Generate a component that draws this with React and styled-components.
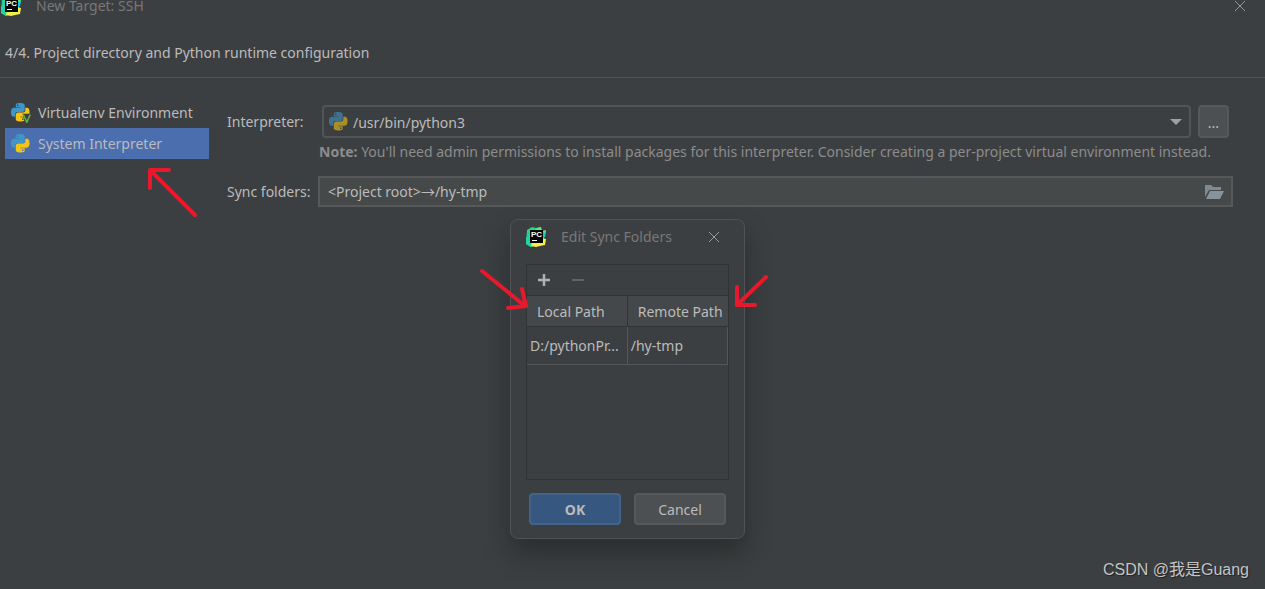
import styled, { createGlobalStyle } from 'styled-components';

const GlobalStyle = createGlobalStyle`
  * {
    box-sizing: border-box;
  }

  body {
    margin: 0;
    background: #3c3f41;
    color: #bbbbbb;
    font-family: 'Noto Sans', 'Open Sans', 'Noto Sans CJK SC', sans-serif;
    font-size: 14px;
    line-height: 20px;
  }

  button,
  input,
  select {
    color: inherit;
    font: inherit;
  }
`;

const Page = styled.div`
  position: relative;
  display: flex;
  flex-direction: column;
  min-height: 100vh;
  overflow: hidden;
`;

const TitleBar = styled.header`
  display: flex;
  align-items: center;
  gap: 15px;
  height: 28px;
  margin-top: -8px;
  padding: 0 19px 0 1px;
  color: #787878;
`;

const WindowTitle = styled.span`
  flex: 1;
  line-height: 12px;
`;

const CloseButton = styled.button`
  display: flex;
  padding: 0;
  border: 0;
  background: none;
  color: #999999;
`;

const StepTitle = styled.h1`
  margin: 0;
  padding: 23px 5px 14px;
  border-bottom: 1px solid #505355;
  font-size: 14px;
  font-weight: 400;
`;

const Content = styled.main`
  display: flex;
  align-items: flex-start;
  gap: 18px;
  padding: 19px 32px 0 5px;
`;

const EnvironmentList = styled.nav`
  flex: 0 0 204px;
`;

const EnvironmentLink = styled.a`
  display: flex;
  align-items: center;
  gap: 7px;
  height: 31px;
  padding-left: 6px;
  background: ${({ $selected }) => ($selected ? '#4b6eaf' : 'transparent')};
  color: inherit;
  text-decoration: none;
`;

const Form = styled.form`
  flex: 1;
  display: grid;
  grid-template-columns: 91px minmax(0, 1fr);
  padding-top: 8px;
`;

const Label = styled.label`
  align-self: center;
  white-space: nowrap;
`;

const InterpreterRow = styled.div`
  display: flex;
  gap: 7px;
  padding: 0 4px;
`;

const SelectBox = styled.div`
  flex: 1;
  display: grid;
  align-items: center;

  > * {
    grid-area: 1 / 1;
  }

  > svg {
    pointer-events: none;
  }

  > svg:first-of-type {
    margin-left: 7px;
  }

  > svg:last-of-type {
    justify-self: end;
    margin-right: 9px;
  }
`;

const Select = styled.select`
  width: 100%;
  height: 33px;
  padding: 2px 29px 0;
  appearance: none;
  border: 2px solid #525557;
  border-radius: 4px;
  background: #3c3f41;
`;

const BrowseButton = styled.button`
  width: 31px;
  height: 33px;
  padding: 2px 0 0;
  border: 2px solid #56595b;
  border-radius: 4px;
  background: #4c5052;
`;

const Note = styled.p`
  grid-column: 2;
  margin: 0 0 14px;
  padding: 4px 0 0 1px;
  color: #8c8c8c;
  white-space: nowrap;
`;

const FolderField = styled.div`
  display: flex;
  align-items: center;
  height: 31px;
  padding: 0 7px 0 8px;
  border: 2px solid #565859;
  background: #45494a;
`;

const FolderInput = styled.input`
  flex: 1;
  min-width: 0;
  padding: 0;
  border: 0;
  background: none;
`;

const IconButton = styled.button`
  display: flex;
  padding: 0;
  border: 0;
  background: none;
`;

const Dialog = styled.section`
  position: absolute;
  top: 219px;
  left: 510px;
  width: 235px;
  padding: 0 16px 13px;
  border: 1px solid #505355;
  border-radius: 8px;
  background: #3c3f41;
  box-shadow: 0 14px 28px rgba(0, 0, 0, 0.3);
`;

const DialogHeader = styled.div`
  display: flex;
  align-items: center;
  gap: 15px;
  height: 34px;
  margin-left: -1px;
  padding-right: 8px;
  color: #787878;
`;

const DialogTitle = styled.h2`
  flex: 1;
  margin: 0;
  font-size: 14px;
  font-weight: 400;
  white-space: nowrap;
`;

const TablePanel = styled.div`
  height: 216px;
  margin: 10px -1px 0;
  border: 1px solid #323232;
`;

const TableToolbar = styled.div`
  display: flex;
  align-items: center;
  gap: 20px;
  height: 30px;
  padding-left: 10px;
`;

const PathTable = styled.table`
  width: 100%;
  table-layout: fixed;
  border-collapse: collapse;

  th,
  td {
    text-align: left;
    white-space: nowrap;
  }

  th {
    height: 31px;
    padding: 2px 0 0 10px;
    border-top: 1px solid #323232;
    border-bottom: 1px solid #323232;
    background: #45484a;
    font-weight: 400;
  }

  th + th {
    border-left: 1px solid #323232;
  }

  td {
    height: 38px;
    padding: 0 3px;
    border-right: 1px solid #555759;
    border-bottom: 1px solid #555759;
  }
`;

const DialogActions = styled.div`
  display: flex;
  gap: 13px;
  padding: 13px 2px 0;
`;

const DialogButton = styled.button`
  flex: 1;
  height: 32px;
  padding: 2px 0 0;
  border: 2px solid ${({ $primary }) => ($primary ? '#43648a' : '#56595b')};
  border-radius: 4px;
  background: ${({ $primary }) => ($primary ? '#365880' : '#4c5052')};
  font-weight: ${({ $primary }) => ($primary ? 700 : 400)};
`;

const Arrows = styled.svg`
  position: absolute;
  top: 0;
  left: 0;
  pointer-events: none;
`;

const Watermark = styled.footer`
  margin-top: auto;
  padding: 0 16px 7px;
  color: #c4c4c4;
  font-family: 'Liberation Sans', 'Noto Sans CJK SC', sans-serif;
  font-size: 16px;
  line-height: 24px;
  text-align: right;
  text-shadow: 1px 1px 1px #222222;
`;

const PyCharmIcon = () => (
  <svg width="20" height="22" viewBox="0 0 20 22" aria-hidden="true">
    <path d="M1 4 6 1l4 1 4-1 2 3 1 5-3 9-9 3-5-3z" fill="#21d789" />
    <path d="M0 12 4 7l3 12-2 2-5-3z" fill="#22d3a5" />
    <path d="m9 3 6-2 1 4 4-1-1 7-5-1z" fill="#65e86b" />
    <path d="m15 6 5 1-2 4 1 3-4-1z" fill="#07c3f2" />
    <path d="m15 12 5 1-1 6-5 1-4 1-5-1 1-4z" fill="#f4f04a" />
    <rect x="4" y="4" width="13" height="13" fill="#000000" />
    <text x="5" y="11" fill="#ffffff" fontFamily="Liberation Sans" fontSize="8" fontWeight="700">
      PC
    </text>
    <path d="M6 14h5v1H6z" fill="#ffffff" />
  </svg>
);

const PythonIcon = ({ venv, dimmed }) => (
  <svg width="20" height="20" viewBox="0 0 26 26" aria-hidden="true">
    <g opacity={dimmed ? 0.6 : 1}>
      <path
        fill="#3e97c8"
        d="M14.25.18l.9.2.73.26.59.3.45.32.34.34.25.34.16.33.1.3.04.26.02.2-.01.13V8.5l-.05.63-.13.55-.21.46-.26.38-.3.31-.33.25-.35.19-.35.14-.33.1-.3.07-.26.04-.21.02H8.77l-.69.05-.59.14-.5.22-.41.27-.33.32-.27.35-.2.36-.15.37-.1.35-.07.32-.04.27-.02.21v3.06H3.17l-.21-.03-.28-.07-.32-.12-.35-.18-.36-.26-.36-.36-.35-.46-.32-.59-.28-.73-.21-.88-.14-1.05-.05-1.23.06-1.22.16-1.04.24-.87.32-.71.36-.57.4-.44.42-.33.42-.24.4-.16.36-.1.32-.05.24-.01h.16l.06.01h8.16v-.83H6.18l-.01-2.75-.02-.37.05-.34.11-.31.17-.28.25-.26.31-.23.38-.2.44-.18.51-.15.58-.12.64-.1.71-.06.77-.04.84-.02 1.27.05zm-6.3 1.98l-.23.33-.08.41.08.41.23.34.33.22.41.09.41-.09.33-.22.23-.34.08-.41-.08-.41-.23-.33-.33-.22-.41-.09-.41.09z"
      />
      <path
        fill="#f2c415"
        d="M21.04 6.11l.28.06.32.12.35.18.36.27.36.35.35.47.32.59.28.73.21.88.14 1.04.05 1.23-.06 1.23-.16 1.04-.24.86-.32.71-.36.57-.4.45-.42.33-.42.24-.4.16-.36.09-.32.05-.24.02-.16-.01h-8.22v.82h5.84l.01 2.76.02.36-.05.34-.11.31-.17.29-.25.25-.31.24-.38.2-.44.17-.51.15-.58.13-.64.09-.71.07-.77.04-.84.01-1.27-.04-1.07-.14-.9-.2-.73-.25-.59-.3-.45-.33-.34-.34-.25-.34-.16-.33-.1-.3-.04-.25-.02-.2.01-.13v-5.34l.05-.64.13-.54.21-.46.26-.38.3-.32.33-.24.35-.2.35-.14.33-.1.3-.06.26-.04.21-.02.13-.01h5.84l.69-.05.59-.14.5-.21.41-.28.33-.32.27-.35.2-.36.15-.36.1-.35.07-.32.04-.28.02-.21V6.07h2.09l.14.01zm-6.47 14.25l-.23.33-.08.41.08.41.23.33.33.23.41.08.41-.08.33-.23.23-.33.08-.41-.08-.41-.23-.33-.33-.23-.41-.08-.41.08z"
      />
    </g>
    {venv && (
      <>
        <path d="M15 14h11v12h-8z" fill="#3c3f41" />
        <path d="m16 15 4.500 10L25 15" fill="none" stroke="#62b543" strokeWidth="2" />
      </>
    )}
  </svg>
);

const CloseIcon = () => (
  <svg width="12" height="12" viewBox="0 0 12 12" aria-hidden="true">
    <path d="m1 1 10 10M11 1 1 11" stroke="currentColor" />
  </svg>
);

const FolderIcon = () => (
  <svg width="20" height="16" viewBox="0 0 20 16" aria-hidden="true">
    <path d="M1 1h6l2 2h8v3H5l-4 7z" fill="#7f8b91" />
    <path d="M6 7h14l-4 8H2z" fill="#87939a" />
  </svg>
);

const environments = [
  { name: 'Virtualenv Environment', venv: true },
  { name: 'System Interpreter', selected: true },
];

const syncFolders = [{ local: 'D:/pythonPr...', remote: '/hy-tmp' }];

const arrowPaths = [
  'M195 215 150 170M169 170H150V188',
  'M482 271 525 306M522 289l4 17-18 2',
  'M766 277 737 305M737 287v18h18',
];

const SyncFoldersDialog = () => (
  <Dialog role="dialog" aria-labelledby="dialog-title">
    <DialogHeader>
      <PyCharmIcon />
      <DialogTitle id="dialog-title">Edit Sync Folders</DialogTitle>
      <CloseButton type="button" aria-label="Close dialog">
        <CloseIcon />
      </CloseButton>
    </DialogHeader>
    <TablePanel>
      <TableToolbar>
        <IconButton type="button" aria-label="Add">
          <svg width="14" height="14" viewBox="0 0 14 14">
            <path d="M7 1v12M1 7h12" stroke="#afb1b3" strokeWidth="2.500" />
          </svg>
        </IconButton>
        <IconButton type="button" aria-label="Remove" disabled>
          <svg width="14" height="14" viewBox="0 0 14 14">
            <path d="M1 7h12" stroke="#606365" strokeWidth="2" />
          </svg>
        </IconButton>
      </TableToolbar>
      <PathTable>
        <thead>
          <tr>
            <th>Local Path</th>
            <th>Remote Path</th>
          </tr>
        </thead>
        <tbody>
          {syncFolders.map((folder) => (
            <tr key={folder.local}>
              <td>{folder.local}</td>
              <td>{folder.remote}</td>
            </tr>
          ))}
        </tbody>
      </PathTable>
    </TablePanel>
    <DialogActions>
      <DialogButton type="button" $primary>
        OK
      </DialogButton>
      <DialogButton type="button">Cancel</DialogButton>
    </DialogActions>
  </Dialog>
);

const App = () => (
  <>
    <GlobalStyle />
    <Page>
      <TitleBar>
        <PyCharmIcon />
        <WindowTitle>New Target: SSH</WindowTitle>
        <CloseButton type="button" aria-label="Close">
          <CloseIcon />
        </CloseButton>
      </TitleBar>
      <StepTitle>4/4. Project directory and Python runtime configuration</StepTitle>
      <Content>
        <EnvironmentList>
          {environments.map(({ name, venv, selected }) => (
            <EnvironmentLink key={name} href="#" $selected={selected}>
              <PythonIcon venv={venv} />
              {name}
            </EnvironmentLink>
          ))}
        </EnvironmentList>
        <Form>
          <Label htmlFor="interpreter">Interpreter:</Label>
          <InterpreterRow>
            <SelectBox>
              <Select id="interpreter">
                <option>/usr/bin/python3</option>
              </Select>
              <PythonIcon dimmed />
              <svg width="12" height="6" viewBox="0 0 12 6" aria-hidden="true">
                <path d="M0 0h12L6 6z" fill="#9da0a2" />
              </svg>
            </SelectBox>
            <BrowseButton type="button">...</BrowseButton>
          </InterpreterRow>
          <Note>
            <b>Note:</b> You'll need admin permissions to install packages for this interpreter. Consider creating a
            per-project virtual environment instead.
          </Note>
          <Label htmlFor="folders">Sync folders:</Label>
          <FolderField>
            <FolderInput id="folders" defaultValue="<Project root>→/hy-tmp" />
            <IconButton type="button" aria-label="Edit sync folders">
              <FolderIcon />
            </IconButton>
          </FolderField>
        </Form>
      </Content>
      <Watermark>CSDN @我是Guang</Watermark>
      <SyncFoldersDialog />
      <Arrows width="800" height="330" viewBox="0 0 800 330" aria-hidden="true">
        {arrowPaths.map((d) => (
          <path key={d} d={d} fill="none" stroke="#e8192c" strokeWidth="4" strokeLinecap="round" strokeLinejoin="round" />
        ))}
      </Arrows>
    </Page>
  </>
);

export default App;
